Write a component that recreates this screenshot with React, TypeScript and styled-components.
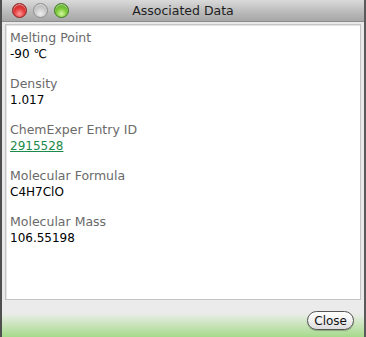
import styled, { createGlobalStyle } from "styled-components";

const GlobalStyle = createGlobalStyle`
  html, body {
    margin: 0;
    padding: 0;
    background: #ffffff;
  }
  body {
    font-family: "DejaVu Sans", "Liberation Sans", sans-serif;
  }
`;

const Window = styled.div`
  width: 366px;
  height: 337px;
  display: flex;
  flex-direction: column;
  box-sizing: border-box;
  border-left: 2px solid #4f4f4f;
  border-right: 2px solid #5a5a5a;
  background: #e9e9e9;
  overflow: hidden;
`;

const TitleBar = styled.div`
  height: 22px;
  flex: 0 0 22px;
  display: flex;
  align-items: center;
  position: relative;
  background: linear-gradient(#dadada, #b9b9b9 60%, #a7a7a7);
  border-bottom: 1px solid #8c8c8c;
  box-sizing: border-box;
`;

const Lights = styled.div`
  display: flex;
  gap: 6px;
  padding-left: 10px;
`;

const Light = styled.span<{ $tone: "red" | "gray" | "green" }>`
  width: 15px;
  height: 15px;
  border-radius: 50%;
  box-sizing: border-box;
  border: 1px solid
    ${(p) => (p.$tone === "red" ? "#8a1f1f" : p.$tone === "green" ? "#3d7a1c" : "#8e8e8e")};
  background: ${(p) =>
    p.$tone === "red"
      ? "radial-gradient(circle at 50% 75%, #ff9a9a 0%, #e33b3b 45%, #b51c1c 100%)"
      : p.$tone === "green"
      ? "radial-gradient(circle at 50% 75%, #d6f7a0 0%, #7cc93a 45%, #4c9a1e 100%)"
      : "radial-gradient(circle at 50% 75%, #eeeeee 0%, #c9c9c9 50%, #a7a7a7 100%)"};
  box-shadow: inset 0 1px 1px rgba(255, 255, 255, 0.6);
`;

const Title = styled.div`
  position: absolute;
  left: 0;
  right: 0;
  text-align: center;
  font-size: 12.5px;
  color: #1e1e1e;
  pointer-events: none;
`;

const Body = styled.div`
  flex: 1;
  display: flex;
  flex-direction: column;
  padding: 2px 3px 0 3px;
  background: #e9e9e9;
`;

const Panel = styled.div`
  height: 276px;
  background: #ffffff;
  border: 1px solid #c4c4c4;
  box-shadow: inset 1px 1px 0 #e4e4e4;
  box-sizing: border-box;
  padding: 5px 0 0 4px;
  display: flex;
  flex-direction: column;
  gap: 14px;
`;

const Field = styled.div`
  display: flex;
  flex-direction: column;
`;

const Label = styled.div`
  font-size: 12.5px;
  line-height: 16px;
  color: #6a6a6a;
`;

const Value = styled.div`
  font-size: 12px;
  line-height: 16px;
  color: #000000;
`;

const LinkValue = styled.a`
  font-size: 12px;
  line-height: 16px;
  color: #1b8a4a;
  text-decoration: underline;
  align-self: flex-start;
`;

const Footer = styled.div`
  flex: 1;
  display: flex;
  justify-content: flex-end;
  align-items: flex-end;
  padding: 0 10px 7px 0;
  background: linear-gradient(#ebebeb 0, #ebebeb 13px, #e6ece2 15px, #a6da8b 100%);
  margin: 0 -3px;
`;

const CloseButton = styled.button`
  font-family: "DejaVu Sans", "Liberation Sans", sans-serif;
  font-size: 12px;
  color: #111;
  height: 19px;
  padding: 0 6px;
  border-radius: 10px;
  border: 1px solid #555;
  background: linear-gradient(#ffffff, #f1f1f1 50%, #dcdcdc);
  box-shadow: 0 1px 1px rgba(0, 0, 0, 0.25);
  line-height: 16px;
`;

const fields: { label: string; value: string; link?: boolean }[] = [
  { label: "Melting Point", value: "-90 ℃" },
  { label: "Density", value: "1.017" },
  { label: "ChemExper Entry ID", value: "2915528", link: true },
  { label: "Molecular Formula", value: "C4H7ClO" },
  { label: "Molecular Mass", value: "106.55198" },
];

export default function App() {
  return (
    <>
      <GlobalStyle />
      <Window>
        <TitleBar>
          <Lights>
            <Light $tone="red" />
            <Light $tone="gray" />
            <Light $tone="green" />
          </Lights>
          <Title>Associated Data</Title>
        </TitleBar>
        <Body>
          <Panel>
            {fields.map((f) => (
              <Field key={f.label}>
                <Label>{f.label}</Label>
                {f.link ? (
                  <LinkValue href="#">{f.value}</LinkValue>
                ) : (
                  <Value>{f.value}</Value>
                )}
              </Field>
            ))}
          </Panel>
          <Footer>
            <CloseButton>Close</CloseButton>
          </Footer>
        </Body>
      </Window>
    </>
  );
}
